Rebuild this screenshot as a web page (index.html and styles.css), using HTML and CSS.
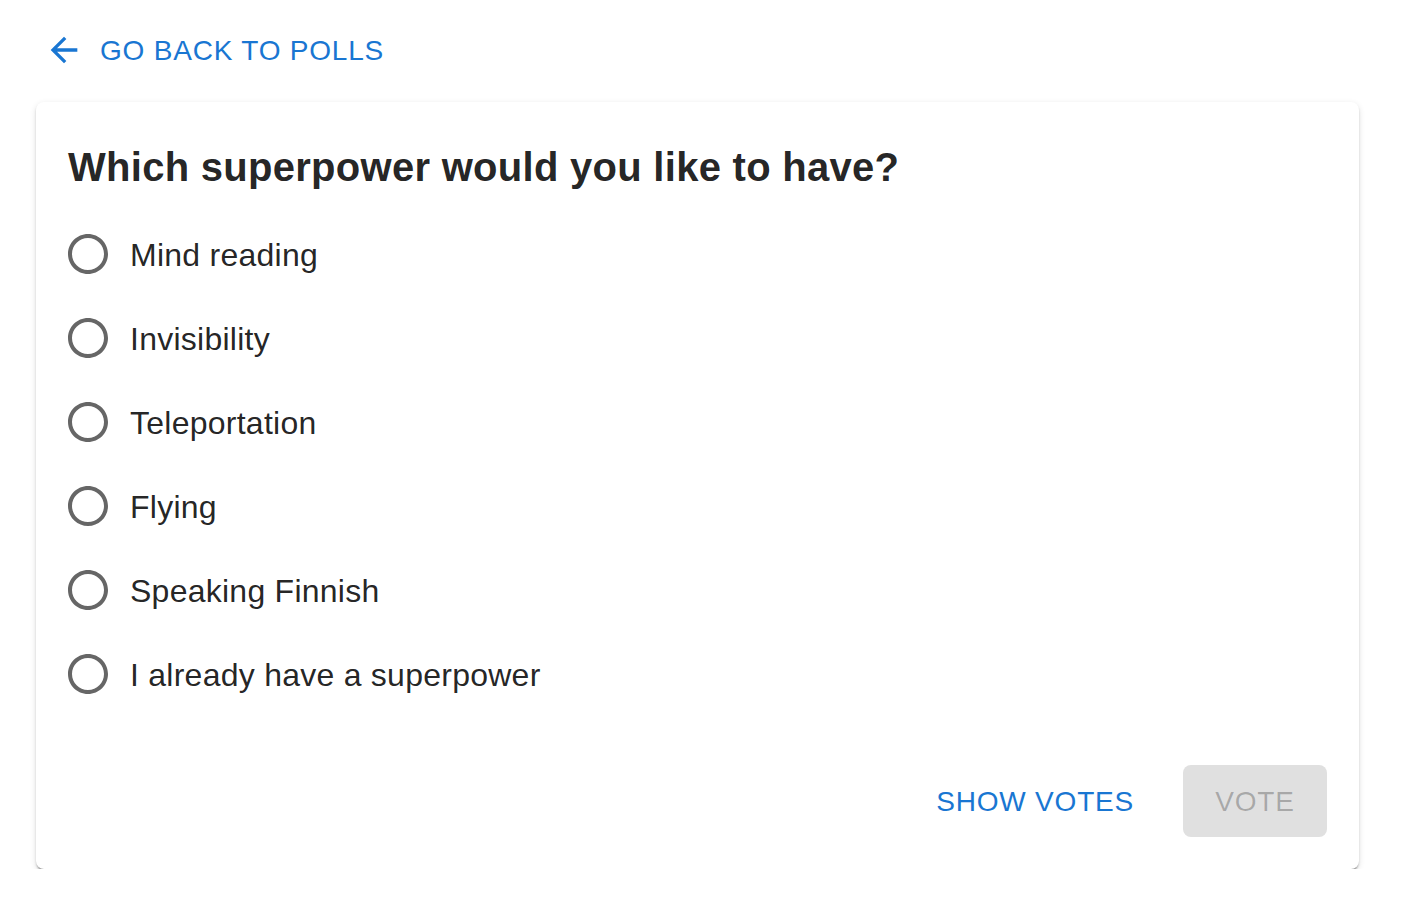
FILE: index.html
```html
<!DOCTYPE html>
<html lang="en">
<head>
<meta charset="utf-8">
<title>Poll</title>
<link rel="stylesheet" href="styles.css">
</head>
<body>
<div class="page">
  <a class="back-btn" href="#">
    <svg class="back-icon" viewBox="0 0 24 24" aria-hidden="true"><path d="M20 11H7.83l5.59-5.59L12 4l-8 8 8 8 1.41-1.41L7.83 13H20v-2z"/></svg>
    <span class="back-label">GO BACK TO POLLS</span>
  </a>
  <div class="card">
    <h2 class="title">Which superpower would you like to have?</h2>
    <div class="options">
      <label class="option"><span class="radio"><svg viewBox="0 0 24 24"><path d="M12 2C6.48 2 2 6.48 2 12s4.48 10 10 10 10-4.48 10-10S17.52 2 12 2zm0 18c-4.42 0-8-3.58-8-8s3.58-8 8-8 8 3.58 8 8-3.58 8-8 8z"/></svg></span><span class="opt-label">Mind reading</span></label>
      <label class="option"><span class="radio"><svg viewBox="0 0 24 24"><path d="M12 2C6.48 2 2 6.48 2 12s4.48 10 10 10 10-4.48 10-10S17.52 2 12 2zm0 18c-4.42 0-8-3.58-8-8s3.58-8 8-8 8 3.58 8 8-3.58 8-8 8z"/></svg></span><span class="opt-label">Invisibility</span></label>
      <label class="option"><span class="radio"><svg viewBox="0 0 24 24"><path d="M12 2C6.48 2 2 6.48 2 12s4.48 10 10 10 10-4.48 10-10S17.52 2 12 2zm0 18c-4.42 0-8-3.58-8-8s3.58-8 8-8 8 3.58 8 8-3.58 8-8 8z"/></svg></span><span class="opt-label">Teleportation</span></label>
      <label class="option"><span class="radio"><svg viewBox="0 0 24 24"><path d="M12 2C6.48 2 2 6.48 2 12s4.48 10 10 10 10-4.48 10-10S17.52 2 12 2zm0 18c-4.42 0-8-3.58-8-8s3.58-8 8-8 8 3.58 8 8-3.58 8-8 8z"/></svg></span><span class="opt-label">Flying</span></label>
      <label class="option"><span class="radio"><svg viewBox="0 0 24 24"><path d="M12 2C6.48 2 2 6.48 2 12s4.48 10 10 10 10-4.48 10-10S17.52 2 12 2zm0 18c-4.42 0-8-3.58-8-8s3.58-8 8-8 8 3.58 8 8-3.58 8-8 8z"/></svg></span><span class="opt-label">Speaking Finnish</span></label>
      <label class="option"><span class="radio"><svg viewBox="0 0 24 24"><path d="M12 2C6.48 2 2 6.48 2 12s4.48 10 10 10 10-4.48 10-10S17.52 2 12 2zm0 18c-4.42 0-8-3.58-8-8s3.58-8 8-8 8 3.58 8 8-3.58 8-8 8z"/></svg></span><span class="opt-label">I already have a superpower</span></label>
    </div>
    <div class="actions">
      <button class="btn-text" type="button">SHOW VOTES</button>
      <button class="btn-contained" type="button" disabled>VOTE</button>
    </div>
  </div>
</div>
</body>
</html>
```

FILE: styles.css
```css
* { box-sizing: border-box; }
html, body { margin: 0; padding: 0; background: #fff; }
body {
  font-family: "Liberation Sans", Arial, Helvetica, sans-serif;
  color: rgba(0, 0, 0, 0.87);
}
.page {
  padding: 14px 0 0 36px;
}
.back-btn {
  display: inline-flex;
  align-items: center;
  height: 72px;
  padding: 0 16px;
  color: #1976d2;
  text-decoration: none;
  font-size: 28px;
  letter-spacing: 0.8px;
  line-height: 1;
}
.back-label {
  padding-top: 2px;
}
.back-icon {
  width: 40px;
  height: 40px;
  fill: #1976d2;
  margin-left: -8px;
  margin-right: 16px;
  flex: none;
}
.card {
  margin-top: 16px;
  width: 1323px;
  background: #fff;
  border-radius: 8px;
  box-shadow: 0 4px 2px -2px rgba(0,0,0,0.3), 0 2px 2px 0 rgba(0,0,0,0.16), 0 2px 6px 0 rgba(0,0,0,0.12);
  padding: 32px;
}
.title {
  margin: 0 0 13px 0;
  padding-top: 1px;
  font-size: 40px;
  font-weight: 700;
  letter-spacing: 0.28px;
  line-height: 64px;
  color: rgba(0, 0, 0, 0.87);
}
.options {
  display: flex;
  flex-direction: column;
}
.option {
  display: flex;
  align-items: center;
  height: 84px;
  margin-left: -22px;
  cursor: pointer;
}
.radio {
  display: flex;
  padding: 18px;
}
.radio svg {
  width: 48px;
  height: 48px;
  fill: rgba(0, 0, 0, 0.6);
}
.opt-label {
  font-size: 32px;
  line-height: 1.5;
  letter-spacing: 0.25px;
  padding-top: 2px;
  color: rgba(0, 0, 0, 0.87);
}
.actions {
  margin-top: 49px;
  display: flex;
  justify-content: flex-end;
  align-items: center;
  gap: 33px;
}
.btn-text, .btn-contained {
  font-family: "Liberation Sans", Arial, Helvetica, sans-serif;
  font-size: 28px;
  letter-spacing: 0.8px;
  height: 72px;
  border: none;
  border-radius: 8px;
  line-height: 1;
  padding-top: 2px;
}
.btn-text {
  background: transparent;
  color: #1976d2;
  padding-left: 16px;
  padding-right: 16px;
}
.btn-contained {
  background: #e0e0e0;
  color: rgba(0, 0, 0, 0.26);
  padding-left: 0;
  padding-right: 0;
  width: 144px;
}
```
